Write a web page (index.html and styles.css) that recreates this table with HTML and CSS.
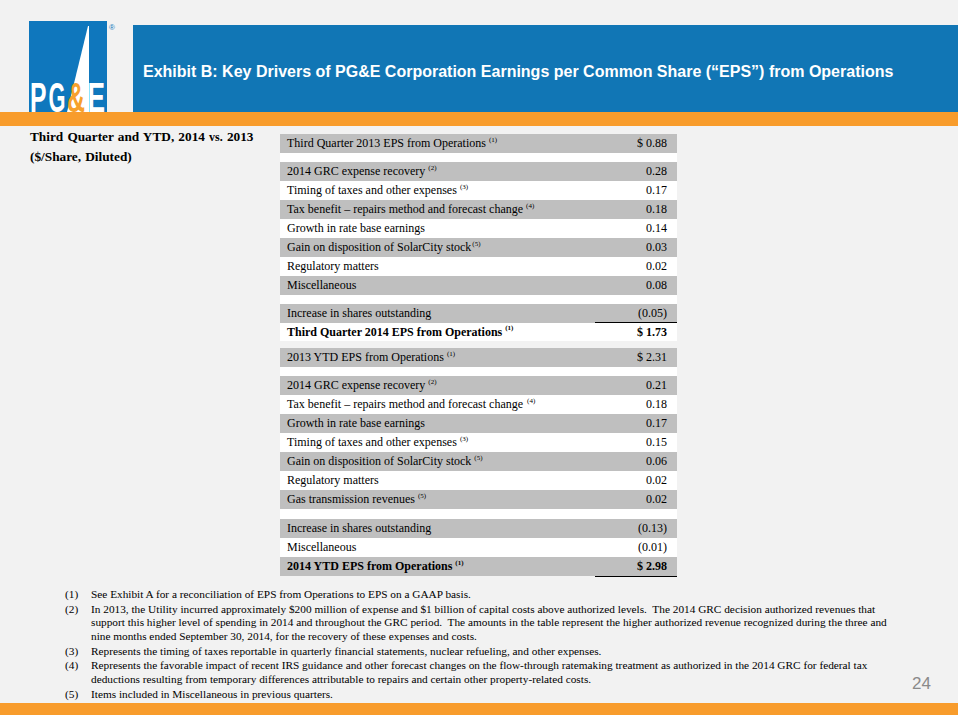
FILE: index.html
```html
<!DOCTYPE html>
<html>
<head>
<meta charset="utf-8">
<link rel="stylesheet" href="styles.css">
</head>
<body>
<div class="slide">
  <header class="top">
    <svg class="logo" width="88" height="91" viewBox="0 0 88 91">
      <rect x="0" y="0" width="78" height="91" fill="#0f77bd"/>
      <polygon points="59,5 60,5 60,91 38,91" fill="#ffffff"/>
      <g font-family="Liberation Sans, Arial, sans-serif" font-weight="700" font-size="43">
        <text x="1" y="91" textLength="16.5" lengthAdjust="spacingAndGlyphs" fill="#ffffff">P</text>
        <text x="19.5" y="91" textLength="17" lengthAdjust="spacingAndGlyphs" fill="#ffffff">G</text>
        <text x="38" y="91" textLength="18" lengthAdjust="spacingAndGlyphs" fill="#f7a12c">&amp;</text>
        <text x="58.5" y="91" textLength="17.5" lengthAdjust="spacingAndGlyphs" fill="#ffffff">E</text>
      </g>
      <text x="80" y="9" font-family="Liberation Sans, Arial, sans-serif" font-size="8" fill="#0f77bd">®</text>
    </svg>
    <div class="titlebar"><h1>Exhibit B: Key Drivers of PG&amp;E Corporation Earnings per Common Share (“EPS”) from Operations</h1></div>
  </header>
  <div class="band"></div>
  <main class="content">
    <div class="subtitle">
      <div class="st1">Third Quarter and YTD, 2014 <span class="vs">vs.</span> 2013</div>
      <div class="st2">($/Share, Diluted)</div>
    </div>
    <div class="table">
      <div class="row g"><span class="lbl">Third Quarter 2013 EPS from Operations<sup>(1)</sup></span><span class="val">$ 0.88</span></div>
      <div class="gap w"></div>
      <div class="row g"><span class="lbl">2014 GRC expense recovery<sup>(2)</sup></span><span class="val">0.28</span></div>
      <div class="row w"><span class="lbl">Timing of taxes and other expenses<sup>(3)</sup></span><span class="val">0.17</span></div>
      <div class="row g"><span class="lbl">Tax benefit – repairs method and forecast change<sup>(4)</sup></span><span class="val">0.18</span></div>
      <div class="row w"><span class="lbl">Growth in rate base earnings</span><span class="val">0.14</span></div>
      <div class="row g"><span class="lbl">Gain on disposition of SolarCity stock<sup class="tight">(5)</sup></span><span class="val">0.03</span></div>
      <div class="row w"><span class="lbl">Regulatory matters</span><span class="val">0.02</span></div>
      <div class="row g"><span class="lbl">Miscellaneous</span><span class="val">0.08</span></div>
      <div class="gap w"></div>
      <div class="row g"><span class="lbl">Increase in shares outstanding</span><span class="val ul">(0.05)</span></div>
      <div class="row w b short"><span class="lbl">Third Quarter 2014 EPS from Operations<sup>(1)</sup></span><span class="val">$ 1.73</span></div>
      <div class="gap t"></div>
      <div class="row g"><span class="lbl">2013 YTD EPS from Operations<sup>(1)</sup></span><span class="val">$ 2.31</span></div>
      <div class="gap w"></div>
      <div class="row g"><span class="lbl">2014 GRC expense recovery<sup>(2)</sup></span><span class="val">0.21</span></div>
      <div class="row w"><span class="lbl">Tax benefit – repairs method and forecast change <sup class="wide">(4)</sup></span><span class="val">0.18</span></div>
      <div class="row g"><span class="lbl">Growth in rate base earnings</span><span class="val">0.17</span></div>
      <div class="row w"><span class="lbl">Timing of taxes and other expenses<sup>(3)</sup></span><span class="val">0.15</span></div>
      <div class="row g"><span class="lbl">Gain on disposition of SolarCity stock<sup>(5)</sup></span><span class="val">0.06</span></div>
      <div class="row w"><span class="lbl">Regulatory matters</span><span class="val">0.02</span></div>
      <div class="row g"><span class="lbl">Gas transmission revenues<sup>(5)</sup></span><span class="val">0.02</span></div>
      <div class="gap w gap10"></div>
      <div class="row g"><span class="lbl">Increase in shares outstanding</span><span class="val">(0.13)</span></div>
      <div class="row w"><span class="lbl">Miscellaneous</span><span class="val">(0.01)</span></div>
      <div class="row g b"><span class="lbl">2014 YTD EPS from Operations<sup>(1)</sup></span><span class="val">$ 2.98</span></div>
      <div class="endline"></div>
    </div>
  </main>
  <footer class="foot">
    <ol class="notes">
      <li><span class="n">(1)</span><span class="tx">See Exhibit A for a reconciliation of EPS from Operations to EPS on a GAAP basis.</span></li>
      <li><span class="n">(2)</span><span class="tx">In 2013, the Utility incurred approximately $200 million of expense and $1 billion of capital costs above authorized levels.&nbsp; The 2014 GRC decision authorized revenues that<br>support this higher level of spending in 2014 and throughout the GRC period.&nbsp; The amounts in the table represent the higher authorized revenue recognized during the three and<br>nine months ended September 30, 2014, for the recovery of these expenses and costs.</span></li>
      <li><span class="n">(3)</span><span class="tx">Represents the timing of taxes reportable in quarterly financial statements, nuclear refueling, and other expenses.</span></li>
      <li><span class="n">(4)</span><span class="tx">Represents the favorable impact of recent IRS guidance and other forecast changes on the flow-through ratemaking treatment as authorized in the 2014 GRC for federal tax<br>deductions resulting from temporary differences attributable to repairs and certain other property-related costs.</span></li>
      <li><span class="n">(5)</span><span class="tx">Items included in Miscellaneous in previous quarters.</span></li>
    </ol>
    <div class="pagenum">24</div>
  </footer>
  <div class="band bottom"></div>
</div>
</body>
</html>
```
FILE: styles.css
```css
html, body {
  margin: 0;
  padding: 0;
}
body {
  background: #f2f2f2;
}
.slide {
  width: 958px;
  height: 715px;
  overflow: hidden;
  display: flex;
  flex-direction: column;
  background: #f2f2f2;
  font-family: "Liberation Serif", "Times New Roman", serif;
  color: #000;
}
.top {
  display: flex;
  align-items: flex-end;
  padding-top: 21px;
  padding-left: 29px;
  height: 91px;
}
.logo {
  display: block;
  flex: none;
}
.titlebar {
  flex: 1;
  height: 87px;
  margin-left: 16px;
  background: #1176b5;
  display: flex;
  align-items: center;
  padding-left: 10px;
  padding-top: 6px;
  box-sizing: border-box;
}
.titlebar h1 {
  margin: 0;
  font-family: "Liberation Sans", Arial, sans-serif;
  font-weight: 700;
  font-size: 16px;
  color: #ffffff;
  white-space: nowrap;
}
.band {
  height: 14px;
  background: #f89c2c;
  flex: none;
}
.band.bottom {
  height: 12px;
}
.content {
  display: flex;
  padding-top: 8px;
  padding-left: 30px;
}
.subtitle {
  width: 250px;
  font-weight: 700;
  font-size: 13.3px;
  line-height: 20px;
  margin-top: -7px;
  word-spacing: 0.8px;
  white-space: nowrap;
}
.subtitle .vs {
  font-size: 12px;
}
.table {
  width: 397px;
  font-size: 12px;
}
.row {
  display: flex;
  height: 19px;
  align-items: stretch;
}
.row.short {
  height: 18px;
}
.row .lbl {
  flex: 1;
  padding-left: 7px;
  display: flex;
  align-items: center;
  white-space: nowrap;
}
.row .val {
  width: 82px;
  box-sizing: border-box;
  padding-right: 10px;
  display: flex;
  align-items: center;
  justify-content: flex-end;
}
.val.ul {
  border-bottom: 1px solid #000;
}
.row.b {
  font-weight: 700;
}
.g {
  background: #bfbfbf;
}
.w {
  background: #ffffff;
}
.t {
  background: transparent;
}
.gap {
  height: 9px;
}
.gap.t {
  height: 7px;
}
.gap.gap10 {
  height: 10px;
}
.endline {
  margin-left: 315px;
  height: 1px;
  background: #000;
}
sup {
  font-size: 7px;
  line-height: 0;
  margin-left: 3px;
  position: relative;
  top: -4px;
}
sup.tight {
  margin-left: 1px;
}
sup.wide {
  margin-left: 4px;
}
.foot {
  flex: 1;
  display: flex;
  align-items: flex-end;
  padding-top: 11px;
  padding-left: 65px;
  padding-right: 27px;
  box-sizing: border-box;
}
.notes {
  list-style: none;
  margin: 0;
  padding: 0;
  flex: 1;
  align-self: flex-start;
  font-size: 11.3px;
  line-height: 13.5px;
}
.notes li {
  display: flex;
  margin-bottom: 1.3px;
}
.notes .n {
  width: 26px;
  flex: none;
}
.notes .tx {
  white-space: nowrap;
}
.pagenum {
  font-family: "Liberation Sans", Arial, sans-serif;
  font-size: 17px;
  color: #8a8a8a;
  padding-bottom: 9px;
}
```
